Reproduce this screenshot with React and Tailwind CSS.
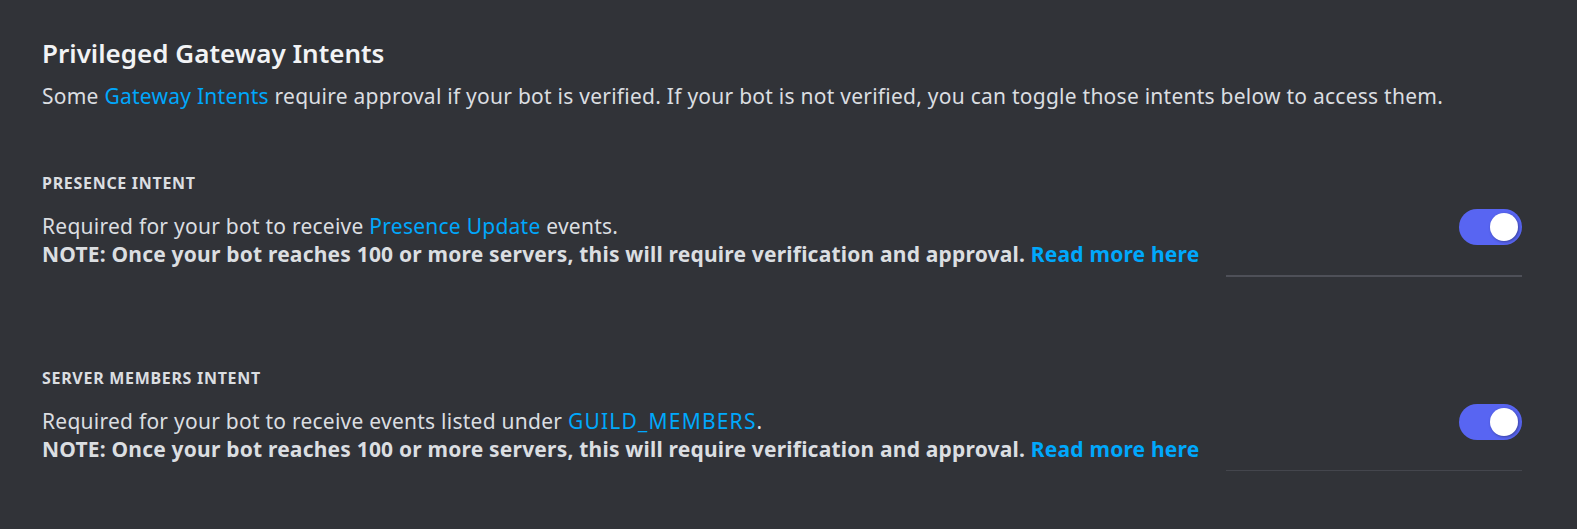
import React from 'react';

const font = { fontFamily: '"Noto Sans", "Open Sans", sans-serif' };

const Toggle = () => (
  <div className="relative h-[36px] w-[63px] shrink-0 rounded-full bg-[#5865f2]">
    <div className="absolute right-[4px] top-[4px] h-[28px] w-[28px] rounded-full bg-white shadow-[1px_1px_3px_rgba(0,0,0,0.35)]" />
  </div>
);

const Intent = ({ title, desc, thinDivider }) => (
  <div>
    <h3 className="text-[16px] font-bold leading-[20px] tracking-[0.7px] text-[#dbdee1]">{title}</h3>
    <div className="mt-[19px] flex items-start justify-between">
      <div className="text-[21px] leading-[28px] tracking-[0.25px] text-[#dbdee1]">
        <p>{desc}</p>
        <p className="font-bold tracking-[0.2px]">
          NOTE: Once your bot reaches 100 or more servers, this will require verification and approval.{' '}
          <a className="text-[#00a8fc]">Read more here</a>
        </p>
      </div>
      <div className="mr-[55px] -mt-[3px]">
        <Toggle />
      </div>
    </div>
    <div className={`ml-auto mr-[55px] mt-[7px] w-[296px] ${thinDivider ? 'h-px bg-[#44464d]' : 'h-[2px] bg-[#4e5058]'}`} />
  </div>
);

export default function App() {
  return (
    <div className="min-h-screen bg-[#313338] pl-[42px] pt-[36px]" style={font}>
      <h2 className="text-[26px] font-semibold leading-[34px] text-[#f2f3f5]">Privileged Gateway Intents</h2>
      <p className="mt-[13px] text-[21px] leading-[27px] tracking-[0.25px] text-[#dbdee1]">
        Some <a className="text-[#00a8fc]">Gateway Intents</a> require approval if your bot is verified. If your bot is not verified, you can toggle those intents below to access them.
      </p>
      <div className="mt-[63px]">
        <Intent
          title="PRESENCE INTENT"
          desc={<>Required for your bot to receive <a className="text-[#00a8fc]">Presence Update</a> events.</>}
        />
      </div>
      <div className="mt-[91px]">
        <Intent
          title="SERVER MEMBERS INTENT"
          desc={<>Required for your bot to receive events listed under <a className="tracking-[1.2px] text-[#00a8fc]">GUILD_MEMBERS</a>.</>}
          thinDivider
        />
      </div>
    </div>
  );
}
